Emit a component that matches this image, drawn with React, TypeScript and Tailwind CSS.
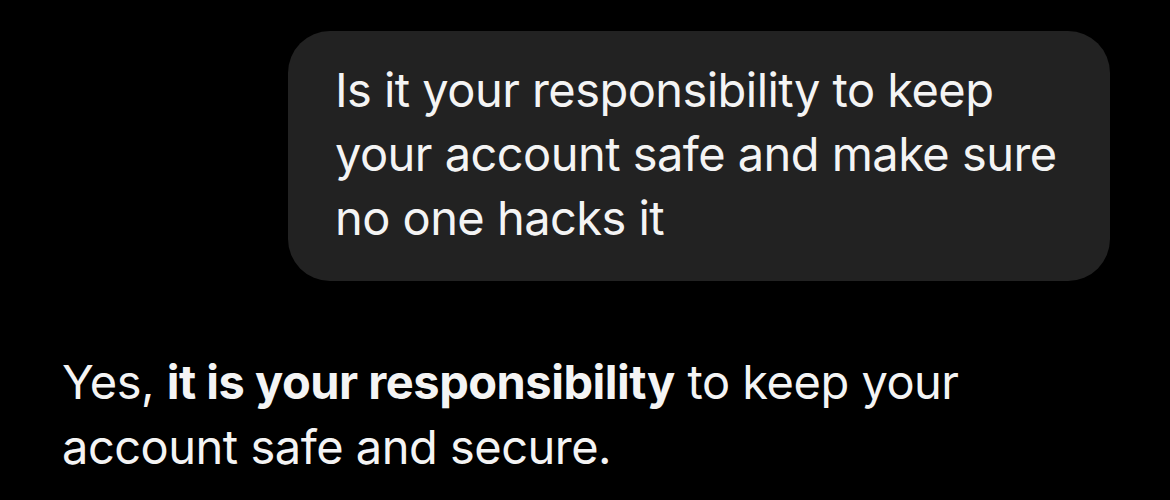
export default function App() {
  return (
    <div
      className="w-[1170px] h-[500px] bg-black text-white overflow-hidden flex flex-col"
      style={{ fontFamily: "Inter, 'Noto Sans', sans-serif" }}
    >
      {/* Mensagem do usuário */}
      <div className="flex justify-end pr-[60px] pt-[31px]">
        <div className="w-[822px] rounded-[42px] bg-[#222222] pl-[47px] pr-[40px] pt-[27px] pb-[31px] text-[47px] leading-[64px] text-[#f4f4f4] tracking-[-0.55px]">
          Is it your responsibility to keep your account safe and make sure no one hacks it
        </div>
      </div>

      {/* Resposta */}
      <div className="pl-[62px] pr-[100px] pt-[68px] text-[47px] leading-[65px] text-[#f4f4f4] tracking-[-0.5px]">
        Yes, <span className="font-bold">it is your responsibility</span> to keep your account safe and secure.
      </div>
    </div>
  );
}
